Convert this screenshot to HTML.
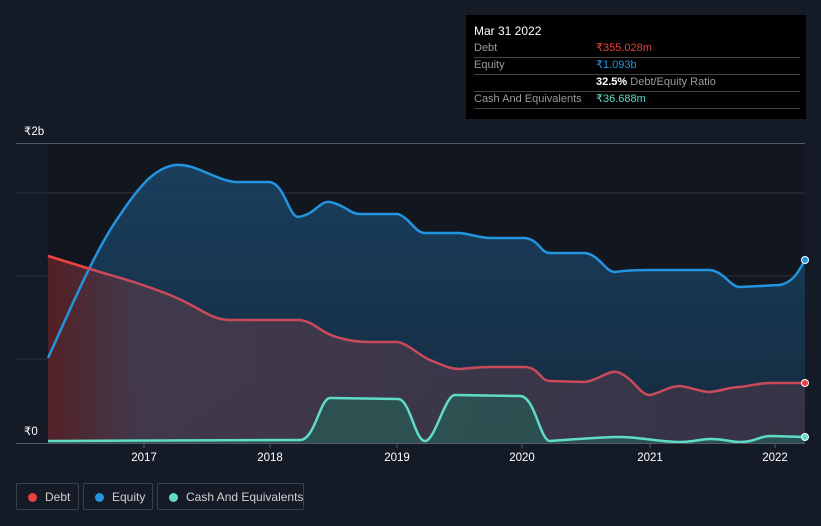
<!DOCTYPE html>
<html style="overflow:hidden"><head><meta charset="utf-8"><style>
html,body{margin:0;width:821px;height:526px;overflow:hidden}
body{background:#151b26;font-family:"Liberation Sans",sans-serif;position:relative}
.tip{position:absolute;left:466px;top:15px;width:340px;height:104px;background:#000;color:#fff;font-size:11px}
.tip .r{position:absolute;left:8px;right:6px;border-bottom:1px solid #444;height:17px;line-height:17px;color:#9a9a9a;white-space:nowrap}
.tip .v{position:absolute;left:122px;top:0}
.leg{position:absolute;top:483px;height:27px;border:1px solid #3a3f48;border-radius:2px;color:#d0d0d0;font-size:12px;line-height:26px;box-sizing:border-box;white-space:nowrap}
.leg i{position:absolute;left:11px;top:9px;width:9px;height:9px;border-radius:50%}
.leg span{position:absolute}
</style></head><body>
<svg width="821" height="526" style="position:absolute;left:0;top:0">
<defs>
<linearGradient id="eg" x1="0" y1="0" x2="0" y2="1"><stop offset="0" stop-color="#1b4567" stop-opacity=".85"/><stop offset="1" stop-color="#153048" stop-opacity=".8"/></linearGradient>
<linearGradient id="dg" x1="0" y1="0" x2="1" y2="0"><stop offset="0" stop-color="#5a2025" stop-opacity=".9"/><stop offset=".12" stop-color="#463a4c" stop-opacity=".9"/><stop offset="1" stop-color="#3a3447" stop-opacity=".9"/></linearGradient>
</defs>
<rect x="48" y="143" width="757" height="300" fill="#12171f"/>
<g stroke="#2c323c" stroke-width="1"><line x1="16" y1="193" x2="805" y2="193"/><line x1="16" y1="276" x2="805" y2="276"/><line x1="16" y1="359" x2="805" y2="359"/></g>
<line x1="16" y1="143.5" x2="805" y2="143.5" stroke="#555a63"/>
<path d="M48,358 C70,310 95,250 120,215 C140,185 155,168 175,165 C195,163 215,180 235,182 L270,182 C285,185 288,215 298,217 C315,215 320,200 330,202 C345,205 350,214 360,214 L398,214 C410,218 415,233 425,233 L460,233 C475,235 480,238 490,238 L525,238 C540,240 540,253 550,253 L585,253 C600,255 605,272 615,272 C630,270 640,270 650,270 L710,270 C725,272 730,287 740,287 L780,285 C795,282 800,268 805,260 L805,443 L48,443Z" fill="url(#eg)"/>
<path d="M48,256 L100,272 C120,278 140,283 170,295 C200,307 210,320 230,320 L300,320 C315,322 320,333 340,338 C350,341 360,342 370,342 L398,342 C410,345 420,356 430,360 C445,366 450,369 460,369 C470,368 480,367 490,367 L525,367 C540,368 540,381 550,381 L585,382 C600,380 610,368 620,373 C635,380 640,395 650,395 C660,393 670,386 680,386 C695,388 700,392 710,392 C725,390 730,387 740,387 C755,385 760,383 770,383 L805,383 L805,443 L48,443Z" fill="url(#dg)"/>
<path d="M48,441 L300,440 C315,440 320,398 330,398 L398,399 C410,399 415,441 425,441 C435,441 445,395 455,395 L520,396 C535,396 540,441 550,441 C580,439 600,437 620,437 C640,437 660,442 680,442 C695,442 700,439 710,439 C725,439 730,442 740,442 C755,442 760,436 770,436 L805,437 L805,443 L48,443Z" fill="#2a5552" opacity=".85"/>
<path d="M48,358 C70,310 95,250 120,215 C140,185 155,168 175,165 C195,163 215,180 235,182 L270,182 C285,185 288,215 298,217 C315,215 320,200 330,202 C345,205 350,214 360,214 L398,214 C410,218 415,233 425,233 L460,233 C475,235 480,238 490,238 L525,238 C540,240 540,253 550,253 L585,253 C600,255 605,272 615,272 C630,270 640,270 650,270 L710,270 C725,272 730,287 740,287 L780,285 C795,282 800,268 805,260" fill="none" stroke="#2394e0" stroke-width="2.5"/>
<path d="M48,256 L100,272 C120,278 140,283 170,295 C200,307 210,320 230,320 L300,320 C315,322 320,333 340,338 C350,341 360,342 370,342 L398,342 C410,345 420,356 430,360 C445,366 450,369 460,369 C470,368 480,367 490,367 L525,367 C540,368 540,381 550,381 L585,382 C600,380 610,368 620,373 C635,380 640,395 650,395 C660,393 670,386 680,386 C695,388 700,392 710,392 C725,390 730,387 740,387 C755,385 760,383 770,383 L805,383" fill="none" stroke="#c94a5a" stroke-width="2.5"/>
<path d="M48,256 L90,269" stroke="#e8413f" stroke-width="2.5"/>
<path d="M48,441 L300,440 C315,440 320,398 330,398 L398,399 C410,399 415,441 425,441 C435,441 445,395 455,395 L520,396 C535,396 540,441 550,441 C580,439 600,437 620,437 C640,437 660,442 680,442 C695,442 700,439 710,439 C725,439 730,442 740,442 C755,442 760,436 770,436 L805,437" fill="none" stroke="#5fdcc8" stroke-width="2.5"/>
<line x1="16" y1="443.5" x2="805" y2="443.5" stroke="#555a63"/>
<g stroke="#555a63"><line x1="144" y1="443" x2="144" y2="448"/><line x1="270" y1="443" x2="270" y2="448"/><line x1="397" y1="443" x2="397" y2="448"/><line x1="522" y1="443" x2="522" y2="448"/><line x1="650" y1="443" x2="650" y2="448"/><line x1="775" y1="443" x2="775" y2="448"/></g>
<circle cx="805" cy="260" r="3.5" fill="#2394e0" stroke="#fff" stroke-width="1"/>
<circle cx="805" cy="383" r="3.5" fill="#e8413f" stroke="#fff" stroke-width="1"/>
<circle cx="805" cy="437" r="3.5" fill="#5fdcc8" stroke="#fff" stroke-width="1"/>
<g fill="#fff" font-size="11.5" font-family="Liberation Sans,sans-serif">
<text x="24" y="135">₹2b</text><text x="24" y="435">₹0</text>
<g text-anchor="middle"><text x="144" y="461">2017</text><text x="270" y="461">2018</text><text x="397" y="461">2019</text><text x="522" y="461">2020</text><text x="650" y="461">2021</text><text x="775" y="461">2022</text></g>
</g>
</svg>
<div class="tip">
<div style="position:absolute;left:8px;top:9px;font-size:12px">Mar 31 2022</div>
<div class="r" style="top:25px">Debt<span class="v" style="color:#e8413f">₹355.028m</span></div>
<div class="r" style="top:42px">Equity<span class="v" style="color:#2394e0">₹1.093b</span></div>
<div class="r" style="top:59px"><span class="v" style="color:#fff"><b>32.5%</b> <span style="color:#9a9a9a">Debt/Equity Ratio</span></span></div>
<div class="r" style="top:76px">Cash And Equivalents<span class="v" style="color:#5fdcc8">₹36.688m</span></div>
</div>
<div class="leg" style="left:16px;width:63px"><i style="background:#e8413f"></i><span style="left:28px">Debt</span></div>
<div class="leg" style="left:83px;width:70px"><i style="background:#2394e0"></i><span style="left:28px">Equity</span></div>
<div class="leg" style="left:157px;width:147px"><i style="background:#5fdcc8"></i><span style="left:28px">Cash And Equivalents</span></div>
</body></html>
